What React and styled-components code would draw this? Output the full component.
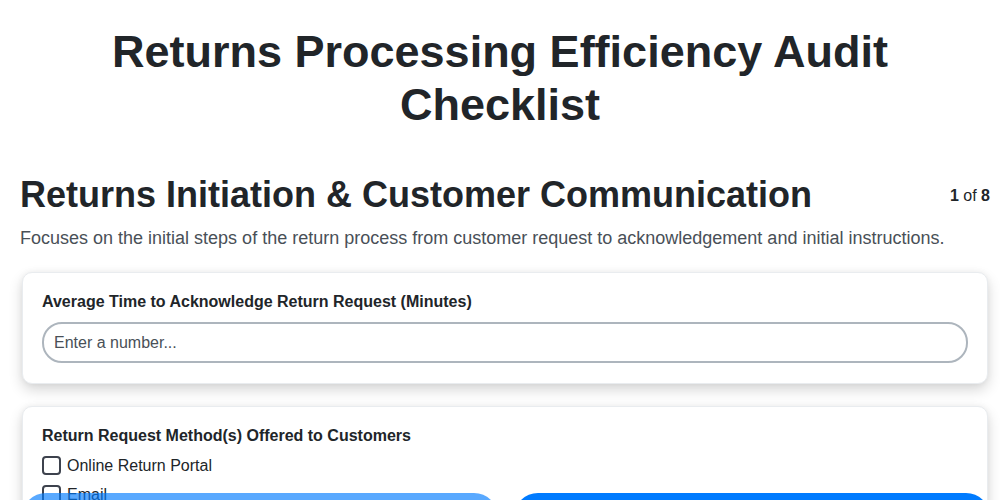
import React, { useState } from 'react';
import styled, { createGlobalStyle } from 'styled-components';

const GlobalStyle = createGlobalStyle`
  * { box-sizing: border-box; }
  body {
    margin: 0;
    background: #ffffff;
    font-family: "Liberation Sans", Arial, sans-serif;
    color: #212529;
  }
`;

const methods = ['Online Return Portal', 'Email', 'Phone', 'In-Store'];

const App = () => {
  const [minutes, setMinutes] = useState('');
  const [checked, setChecked] = useState({});

  const toggle = (name) => setChecked((c) => ({ ...c, [name]: !c[name] }));

  return (
    <>
      <GlobalStyle />
      <Header>
        <PageTitle>Returns Processing Efficiency Audit Checklist</PageTitle>
      </Header>
      <Page>
        <SectionHeader>
          <SectionTitle>Returns Initiation &amp; Customer Communication</SectionTitle>
          <StepCounter>
            <strong>1</strong> of <strong>8</strong>
          </StepCounter>
        </SectionHeader>
        <SectionDescription>
          Focuses on the initial steps of the return process from customer request to acknowledgement and initial instructions.
        </SectionDescription>

        <QuestionCard>
          <QuestionLabel>Average Time to Acknowledge Return Request (Minutes)</QuestionLabel>
          <NumberInput
            type="number"
            placeholder="Enter a number..."
            value={minutes}
            onChange={(e) => setMinutes(e.target.value)}
          />
        </QuestionCard>

        <QuestionCard>
          <QuestionLabel>Return Request Method(s) Offered to Customers</QuestionLabel>
          <OptionList>
            {methods.map((m) => (
              <OptionRow key={m}>
                <CheckBox checked={!!checked[m]} onChange={() => toggle(m)} type="checkbox" />
                {m}
              </OptionRow>
            ))}
          </OptionList>
        </QuestionCard>
      </Page>

      <NavBar>
        <NavButton $disabled disabled>Previous</NavButton>
        <NavButton>Next</NavButton>
      </NavBar>
    </>
  );
};

const Header = styled.header`
  padding: 25px 20px 0;
`;

const PageTitle = styled.h1`
  margin: 0 auto;
  max-width: 820px;
  text-align: center;
  font-size: 45px;
  line-height: 53px;
  font-weight: 700;
  color: #212529;
`;

const Page = styled.div`
  padding: 0 10px 120px 20px;
`;

const SectionHeader = styled.div`
  display: flex;
  align-items: flex-start;
  justify-content: space-between;
  margin-top: 42px;
`;

const SectionTitle = styled.h2`
  margin: 0;
  font-size: 36px;
  line-height: 44px;
  font-weight: 700;
  color: #212529;
`;

const StepCounter = styled.div`
  font-size: 16px;
  margin-top: 14px;
  color: #212529;
`;

const SectionDescription = styled.p`
  margin: 8px 0 21px;
  font-size: 18px;
  line-height: 26px;
  color: #495057;
`;

const QuestionCard = styled.div`
  margin: 0 2px 22px;
  padding: 19px 19px 20px;
  background: #ffffff;
  border: 1px solid #e9ecef;
  border-radius: 10px;
  box-shadow: 0 6px 14px rgba(0, 0, 0, 0.16), 0 0 6px rgba(0, 0, 0, 0.05);
`;

const QuestionLabel = styled.div`
  font-size: 16px;
  line-height: 20px;
  font-weight: 700;
  color: #212529;
  margin-bottom: 10px;
`;

const NumberInput = styled.input`
  display: block;
  width: 100%;
  height: 41px;
  padding: 0 10px;
  font-family: inherit;
  font-size: 16px;
  color: #212529;
  border: 2px solid #adb5bd;
  border-radius: 20px;
  outline: none;
  &::placeholder { color: #495057; }
  &::-webkit-inner-spin-button { -webkit-appearance: none; }
`;

const OptionList = styled.div`
  display: flex;
  flex-direction: column;
  gap: 10px;
`;

const OptionRow = styled.label`
  display: flex;
  align-items: center;
  gap: 6px;
  font-size: 16px;
  color: #212529;
`;

const CheckBox = styled.input`
  appearance: none;
  margin: 0;
  width: 19px;
  height: 19px;
  border: 2px solid #3d424d;
  border-radius: 4px;
  background: ${({ checked }) => (checked ? '#007bff' : '#fff')};
`;

const NavBar = styled.div`
  position: fixed;
  left: 0;
  right: 0;
  bottom: -49px;
  display: flex;
  gap: 16px;
  padding: 0 10px 0 22px;
`;

const NavButton = styled.button`
  flex: 1;
  height: 56px;
  border: none;
  border-radius: 24px;
  background: #007bff;
  opacity: ${({ $disabled }) => ($disabled ? 0.65 : 1)};
  color: #ffffff;
  font-family: inherit;
  font-size: 17px;
  font-weight: 700;
`;

export default App;
